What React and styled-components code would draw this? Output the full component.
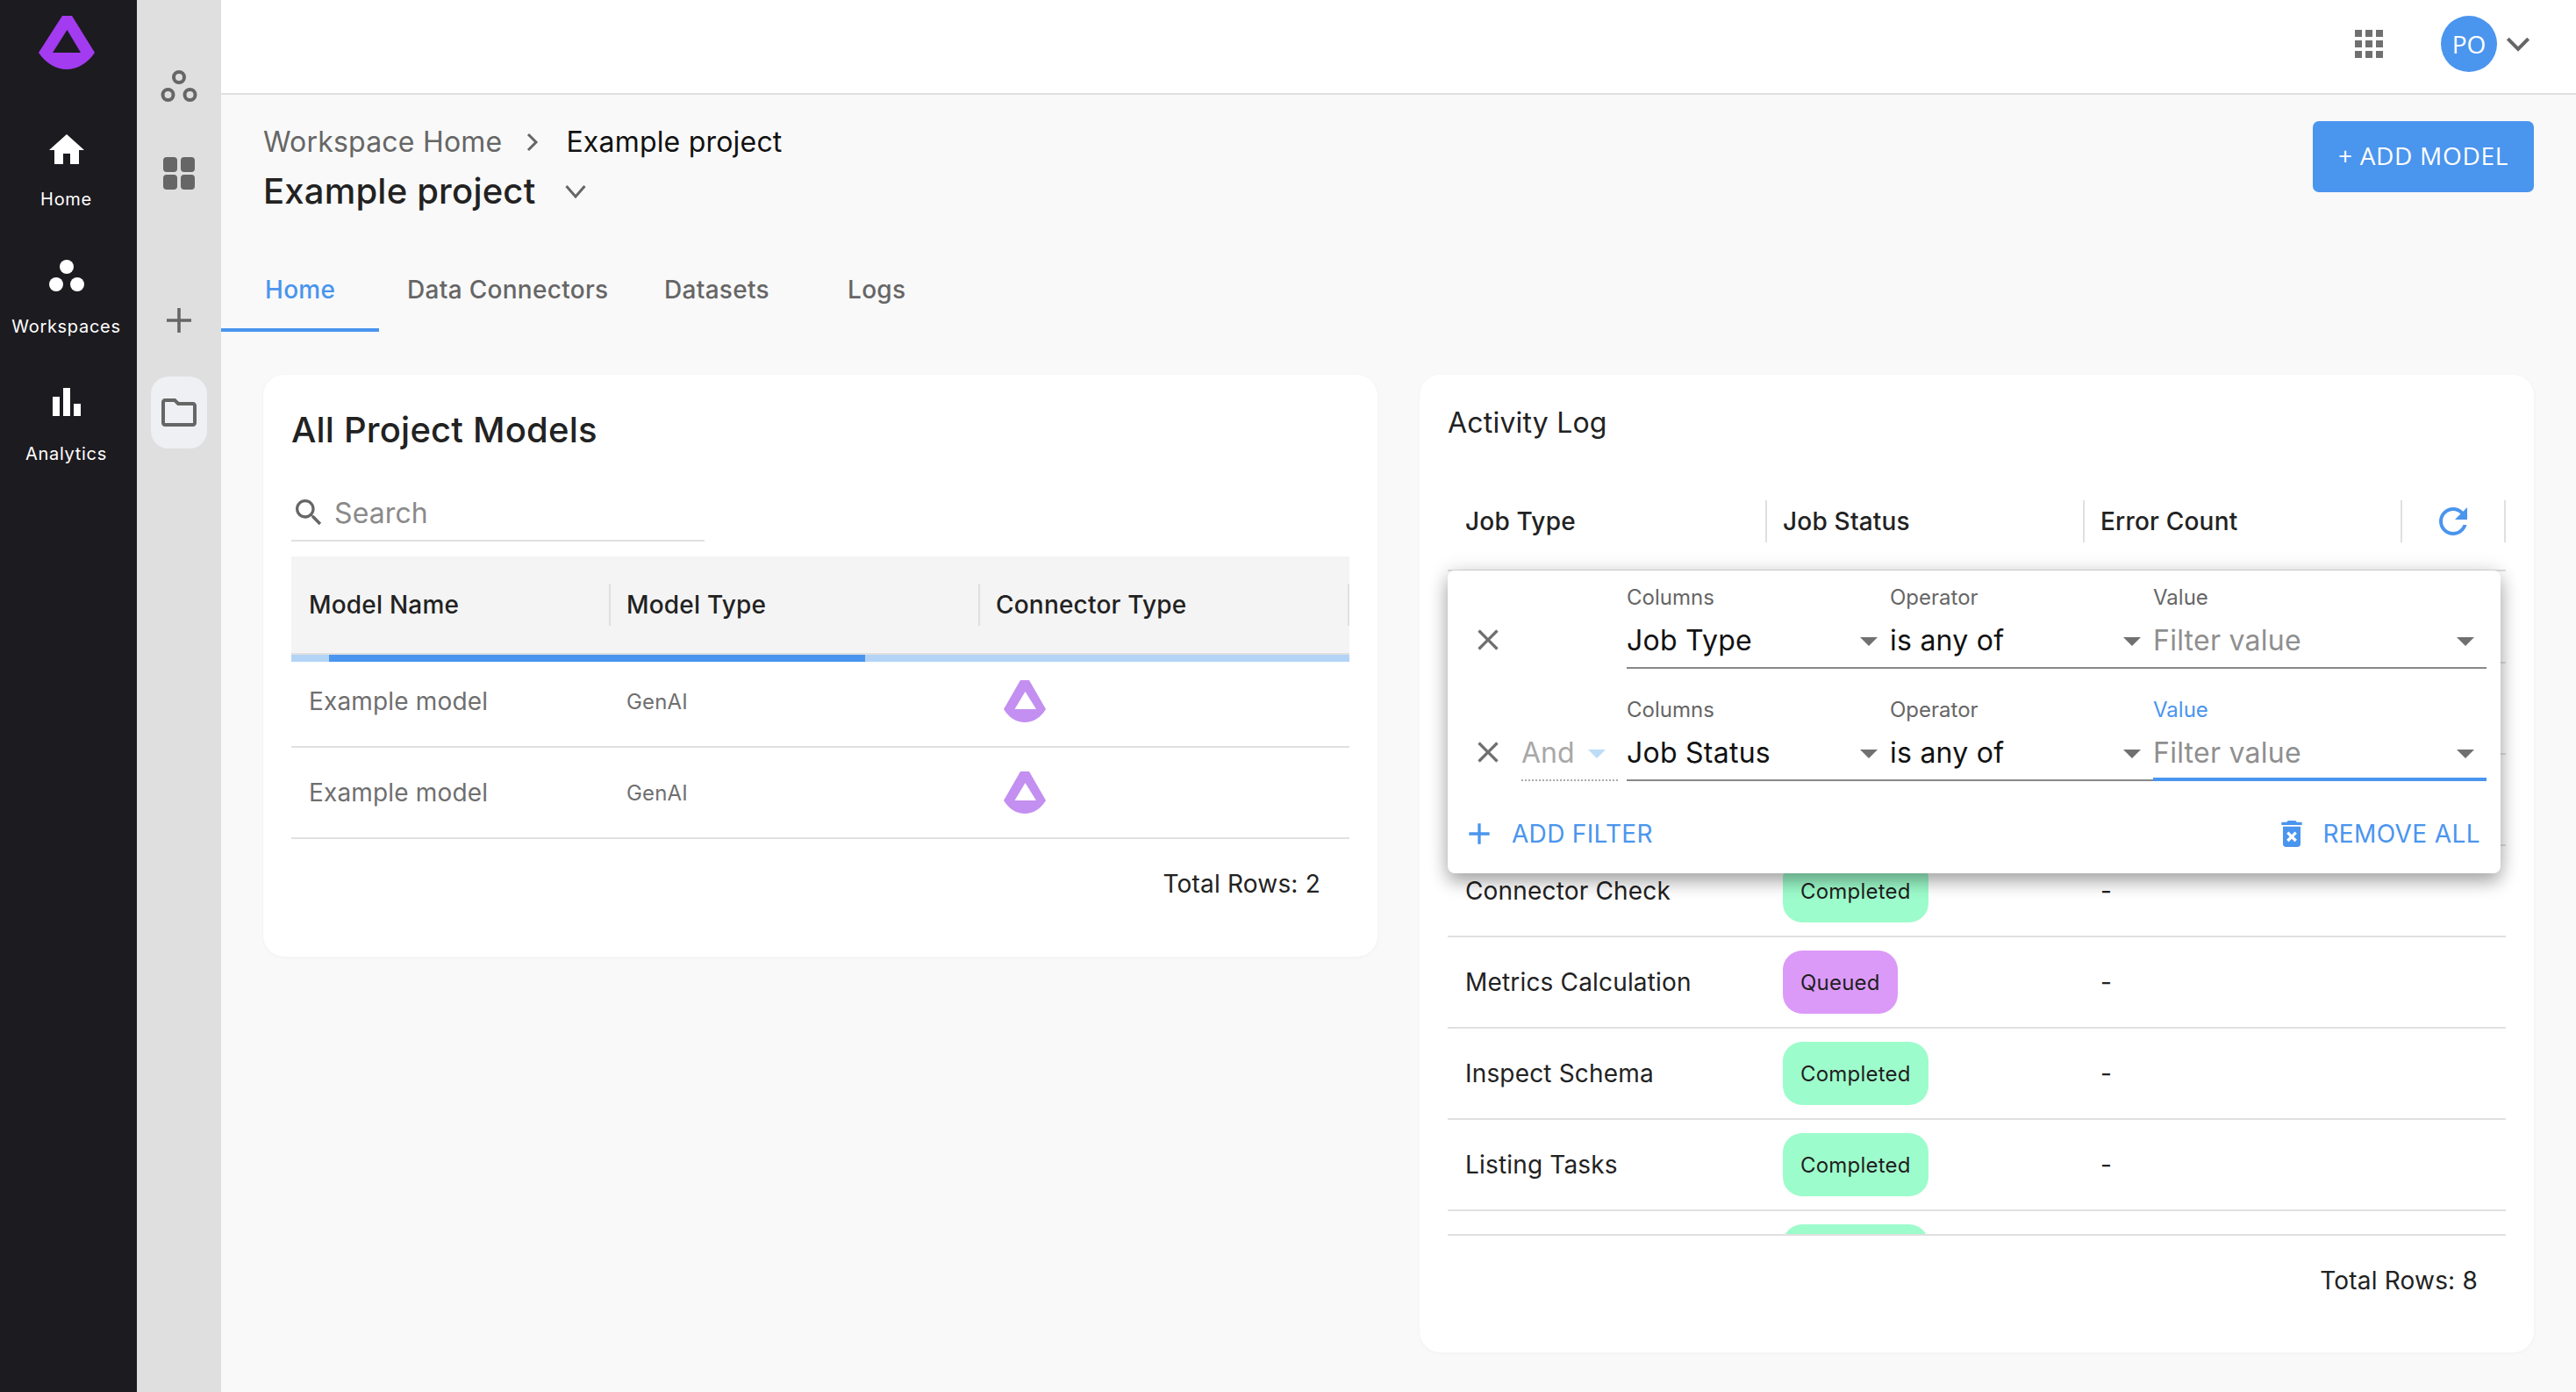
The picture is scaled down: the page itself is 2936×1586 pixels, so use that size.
import React from 'react';
import styled, { createGlobalStyle } from 'styled-components';

const Global = createGlobalStyle`
  html, body { margin: 0; padding: 0; background: #f9f9f9; }
  body { font-family: Inter, "Liberation Sans", sans-serif; color: #1f1f1f; overflow: hidden; }
`;

const ACCENT = '#4a95ee';

const Page = styled.div`
  display: flex;
  width: 2936px;
  height: 1586px;
  overflow: hidden;
`;

const MainRail = styled.nav`
  width: 156px;
  flex: none;
  background: #1c1b20;
  display: flex;
  flex-direction: column;
  align-items: center;
  padding: 18px 5px 0 0;
  box-sizing: border-box;
`;

const Logo = styled.svg`
  display: block;
  width: 64px;
  height: 62px;
  margin-bottom: 67px;
`;

const NavItem = styled.a`
  display: flex;
  flex-direction: column;
  align-items: center;
  height: 145px;
  color: #fff;
  font-size: 20px;
  font-weight: 400;
  letter-spacing: 0.7px;
  line-height: 25px;
  svg { display: block; width: 48px; height: 48px; margin-bottom: 20px; fill: #fff; }
`;

const SubRail = styled.aside`
  width: 96px;
  flex: none;
  background: #dfdfdf;
  display: flex;
  flex-direction: column;
  align-items: center;
  padding-top: 74px;
  box-sizing: border-box;
`;

const RailIcon = styled.svg`
  display: block;
  width: 48px;
  height: 48px;
  fill: #666;
`;

const RailButton = styled.div`
  width: 64px;
  height: ${p => (p.$active ? 82 : 48)}px;
  border-radius: 20px;
  display: flex;
  align-items: center;
  justify-content: center;
  background: ${p => (p.$active ? '#eff0f4' : 'transparent')};
  margin-bottom: ${p => p.$gap || 0}px;
`;

const Body = styled.div`
  flex: 1;
  min-width: 0;
  display: flex;
  flex-direction: column;
`;

const TopBar = styled.header`
  height: 108px;
  flex: none;
  box-sizing: border-box;
  background: #fff;
  border-bottom: 2px solid #e0e0e0;
  display: flex;
  align-items: center;
  justify-content: flex-end;
  padding: 0 52px 6px 0;
`;

const AppsIcon = styled.svg`
  width: 48px;
  height: 48px;
  fill: #707070;
  margin-right: 58px;
`;

const Avatar = styled.div`
  width: 64px;
  height: 64px;
  border-radius: 50%;
  background: ${ACCENT};
  color: #fff;
  font-family: "Open Sans", sans-serif;
  font-size: 28px;
  display: flex;
  align-items: center;
  justify-content: center;
`;

const Chevron = styled.svg`
  width: 28px;
  height: 28px;
  margin-left: 10px;
  fill: none;
  stroke: #666;
  stroke-width: 3.5;
`;

const TitleChevron = styled.svg`
  width: 24px;
  height: 24px;
  margin-left: 34px;
  fill: none;
  stroke: #666;
  stroke-width: 3;
`;

const Content = styled.main`
  flex: 1;
  padding: 30px 48px 0 48px;
  min-height: 0;
  display: flex;
  flex-direction: column;
`;

const HeadRow = styled.div`
  display: flex;
  justify-content: space-between;
  align-items: flex-start;
  height: 132px;
`;

const Crumbs = styled.div`
  display: flex;
  align-items: center;
  font-size: 32px;
  line-height: 48px;
  letter-spacing: 0.2px;
  color: #666;
`;

const CrumbSep = styled.svg`
  width: 16px;
  height: 24px;
  margin: 0 30px 0 27px;
  fill: none;
  stroke: #666;
  stroke-width: 3;
`;

const CrumbNow = styled.span`
  color: #111;
`;

const Title = styled.div`
  display: flex;
  align-items: center;
  font-size: 40px;
  line-height: 64px;
  font-weight: 500;
  letter-spacing: 0.2px;
  color: #222;
`;

const AddButton = styled.button`
  border: 0;
  width: 252px;
  height: 81px;
  padding: 0 0 3px;
  border-radius: 7px;
  background: ${ACCENT};
  color: #fff;
  font-family: "Open Sans", sans-serif;
  font-size: 28px;
  letter-spacing: 0.7px;
`;

const Tabs = styled.div`
  display: flex;
  height: 108px;
  margin-left: -48px;
  margin-bottom: 49px;
`;

const Tab = styled.div`
  width: ${p => p.$w}px;
  height: 108px;
  padding: 40px 0 0 ${p => p.$pad}px;
  box-sizing: border-box;
  font-size: 28px;
  line-height: 40px;
  font-weight: 500;
  letter-spacing: 0.3px;
  color: ${p => (p.$active ? ACCENT : '#666')};
  border-bottom: 4px solid ${p => (p.$active ? ACCENT : 'transparent')};
`;

const Cards = styled.div`
  display: flex;
  gap: 48px;
  align-items: flex-start;
`;

const Card = styled.section`
  background: #fff;
  border-radius: 24px;
  box-sizing: border-box;
  width: 1270px;
  height: ${p => p.$h}px;
  padding: ${p => p.$top}px 32px 0 32px;
  box-shadow: 0 1px 4px rgba(0, 0, 0, 0.04);
`;

const CardTitle = styled.h2`
  margin: 0;
  font-size: 40px;
  line-height: 60px;
  font-weight: 500;
  letter-spacing: 0.2px;
  color: #222;
`;

const LogTitle = styled.h2`
  margin: 0;
  font-size: 32px;
  line-height: 50px;
  font-weight: 400;
  letter-spacing: 0.2px;
  color: #222;
`;

const SearchBox = styled.div`
  width: 471px;
  height: 62px;
  margin: 33px 0 17px;
  border-bottom: 2px solid #e0e0e0;
  display: flex;
  align-items: center;
  font-size: 32px;
  letter-spacing: 0.1px;
  color: #8a8a8a;
  svg { width: 40px; height: 40px; fill: #666; margin-right: 9px; }
`;

const GridRow = styled.div`
  display: grid;
  grid-template-columns: ${p => p.$cols};
  align-items: ${p => p.$align || 'center'};
  height: ${p => p.$h}px;
  padding-bottom: ${p => p.$bottom || 0}px;
  box-sizing: border-box;
  background: ${p => p.$bg || 'transparent'};
  border-bottom: ${p => (p.$line ? '2px solid #e0e0e0' : '0')};
`;

const HeadCell = styled.div`
  height: 48px;
  display: flex;
  align-items: center;
  padding-left: ${p => (p.$first ? 20 : 18)}px;
  border-left: ${p => (p.$first ? '0' : '2px solid #e0e0e0')};
  border-right: ${p => (p.$last ? '2px solid #e0e0e0' : '0')};
  font-size: 28px;
  font-weight: 500;
  letter-spacing: 0.2px;
  color: #222;
`;

const Progress = styled.div`
  height: 8px;
  background: #b3d4f6;
  position: relative;
`;

const ProgressBar = styled.div`
  position: absolute;
  left: 43px;
  width: 611px;
  top: 0;
  bottom: 0;
  background: ${ACCENT};
`;

const Cell = styled.div`
  padding-left: 20px;
  font-size: ${p => p.$size || 28}px;
  letter-spacing: 0.17px;
  color: ${p => p.$color || '#6f6f6f'};
`;

const ConnectorLogo = styled.svg`
  display: block;
  width: 48px;
  height: 48px;
  margin-left: 9px;
`;

const Footer = styled.div`
  text-align: right;
  font-size: 28px;
  line-height: 40px;
  letter-spacing: 0.2px;
  color: #222;
  padding-right: ${p => p.$pad}px;
  margin-top: 31px;
`;

const LogTable = styled.div`
  margin-top: 63px;
  position: relative;
`;

const RefreshCell = styled.div`
  height: 48px;
  display: flex;
  align-items: center;
  padding-left: 34px;
  border-left: 2px solid #e0e0e0;
  border-right: 2px solid #e0e0e0;
  svg { width: 48px; height: 48px; fill: ${ACCENT}; }
`;

const Scroller = styled.div`
  height: 757px;
  padding-top: 1px;
  overflow: hidden;
  border-bottom: 2px solid #e0e0e0;
  box-sizing: border-box;
`;

const Chip = styled.span`
  display: inline-flex;
  align-items: center;
  height: 72px;
  padding: 0 20px;
  border-radius: 22px;
  font-size: 24px;
  letter-spacing: 0.2px;
  color: #1f1f1f;
  background: ${p => (p.$kind === 'queued' ? '#dc9af8' : '#9dfccb')};
`;

const Popover = styled.div`
  position: absolute;
  left: 0;
  top: 80px;
  width: 1200px;
  height: 345px;
  background: #fff;
  border-radius: 8px;
  box-shadow: 0 10px 20px rgba(0, 0, 0, 0.3), 0 0 24px rgba(0, 0, 0, 0.12);
  box-sizing: border-box;
  padding: 0 16px 0 24px;
  display: flex;
  flex-direction: column;
`;

const FilterRow = styled.div`
  display: grid;
  grid-template-columns: 60px 120px 300px 300px 380px;
  height: 112px;
  flex: none;
  & + & { margin-top: 16px; }
`;

const IconCell = styled.div`
  display: flex;
  align-items: flex-end;
  padding-bottom: 13px;
  svg { width: 40px; height: 40px; fill: #707070; margin-left: 2px; }
`;

const LinkCell = styled.div`
  display: flex;
  align-items: flex-end;
  font-size: 32px;
  color: #a8a8a8;
  margin-right: 10px;
`;

const LinkInner = styled.div`
  width: 100%;
  height: 64px;
  box-sizing: border-box;
  display: flex;
  justify-content: space-between;
  align-items: center;
  padding-right: 14px;
  border-bottom: 2px dotted #aaa;
`;

const Field = styled.div`
  display: flex;
  flex-direction: column;
  justify-content: flex-end;
`;

const FieldLabel = styled.label`
  font-size: 24px;
  line-height: 30px;
  margin-bottom: 2px;
  color: ${p => (p.$focus ? ACCENT : '#666')};
`;

const FieldValue = styled.div`
  height: 64px;
  box-sizing: border-box;
  display: flex;
  align-items: center;
  justify-content: space-between;
  font-size: 32px;
  letter-spacing: 0.25px;
  color: ${p => (p.$muted ? '#8f8f8f' : '#111')};
  border-bottom: ${p => (p.$focus ? `4px solid ${ACCENT}` : '2px solid #888')};
  padding: ${p => (p.$focus ? '2px' : '0')} 14px 0 0;
`;

const Caret = styled.span`
  width: 0;
  height: 0;
  margin-top: 3px;
  border-left: 10px solid transparent;
  border-right: 10px solid transparent;
  border-top: 10px solid ${p => p.$color || '#707070'};
`;

const PopActions = styled.div`
  display: flex;
  justify-content: space-between;
  align-items: center;
  margin-top: 40px;
  padding-right: 7px;
`;

const ActionBtn = styled.div`
  display: flex;
  align-items: center;
  gap: ${p => p.$gap}px;
  margin-left: ${p => p.$shift || 0}px;
  color: ${ACCENT};
  font-size: 28px;
  letter-spacing: ${p => p.$spacing}px;
  svg { width: 40px; height: 40px; fill: ${ACCENT}; }
`;

const logoPath = 'M27 0H38L64 42C56 54 44 61 32 61C20 61 8 54 0 42ZM32.5 16L16 42H48Z';
const connectorPath = 'M19 0H29L48 33C42 43 33 48 24 48C15 48 6 43 0 33ZM24.5 13L12.5 33H37Z';

const models = ['Example model', 'Example model'];
const MODEL_COLS = '362px 421px 1fr';
const LOG_COLS = '362px 362px 362px 120px';

const logRows = [
  { id: 1 },
  { id: 2 },
  { id: 3 },
  { id: 4, name: 'Connector Check', status: 'Completed' },
  { id: 5, name: 'Metrics Calculation', status: 'Queued' },
  { id: 6, name: 'Inspect Schema', status: 'Completed' },
  { id: 7, name: 'Listing Tasks', status: 'Completed' },
  { id: 8, status: 'Completed' },
];

function FilterLine({ column, focus, link }) {
  return (
    <FilterRow>
      <IconCell>
        <svg viewBox="0 0 24 24"><path d="M19 6.41 17.59 5 12 10.59 6.41 5 5 6.41 10.59 12 5 17.59 6.41 19 12 13.41 17.59 19 19 17.59 13.41 12z" /></svg>
      </IconCell>
      <LinkCell>
        {link && (
          <LinkInner>
            And
            <Caret $color="#bcdcf8" />
          </LinkInner>
        )}
      </LinkCell>
      <Field>
        <FieldLabel>Columns</FieldLabel>
        <FieldValue>{column}<Caret /></FieldValue>
      </Field>
      <Field>
        <FieldLabel>Operator</FieldLabel>
        <FieldValue>is any of<Caret /></FieldValue>
      </Field>
      <Field>
        <FieldLabel $focus={focus}>Value</FieldLabel>
        <FieldValue $muted $focus={focus}>Filter value<Caret /></FieldValue>
      </Field>
    </FilterRow>
  );
}

export default function App() {
  return (
    <Page>
      <Global />
      <MainRail>
        <Logo viewBox="0 0 64 62"><path fill="#a33bf0" d={logoPath} /></Logo>
        <NavItem>
          <svg viewBox="0 0 24 24"><path d="M10 20v-6h4v6h5v-8h3L12 3 2 12h3v8z" /></svg>
          Home
        </NavItem>
        <NavItem>
          <svg viewBox="0 0 48 48"><circle cx="24" cy="12" r="8" /><circle cx="12" cy="32" r="8" /><circle cx="36" cy="32" r="8" /></svg>
          Workspaces
        </NavItem>
        <NavItem>
          <svg viewBox="0 0 48 48"><rect x="8" y="15" width="8" height="22" /><rect x="20" y="5" width="8" height="32" /><rect x="32" y="23" width="8" height="14" /></svg>
          Analytics
        </NavItem>
      </MainRail>
      <SubRail>
        <RailButton $gap={51}>
          <RailIcon viewBox="0 0 48 48">
            <g fill="none" stroke="#666" strokeWidth="4">
              <circle cx="24" cy="14" r="6" />
              <circle cx="11.5" cy="34" r="6" />
              <circle cx="36.5" cy="34" r="6" />
            </g>
          </RailIcon>
        </RailButton>
        <RailButton $gap={120}>
          <RailIcon viewBox="0 0 48 48">
            <rect x="6" y="6" width="16" height="17" rx="4" />
            <rect x="26" y="6" width="16" height="17" rx="4" />
            <rect x="6" y="26" width="16" height="17" rx="4" />
            <rect x="26" y="26" width="16" height="17" rx="4" />
          </RailIcon>
        </RailButton>
        <RailButton $gap={40}>
          <RailIcon viewBox="0 0 48 48">
            <path d="M22.2 10h3.6v12.2H38v3.6H25.8V38h-3.6V25.8H10v-3.6h12.2z" />
          </RailIcon>
        </RailButton>
        <RailButton $active>
          <RailIcon viewBox="0 0 24 24">
            <path d="M9.17 6l2 2H20v10H4V6h5.17M10 4H4c-1.1 0-1.99.9-1.99 2L2 18c0 1.1.9 2 2 2h16c1.1 0 2-.9 2-2V8c0-1.1-.9-2-2-2h-8l-2-2z" />
          </RailIcon>
        </RailButton>
      </SubRail>
      <Body>
        <TopBar>
          <AppsIcon viewBox="0 0 24 24">
            <path d="M4 8h4V4H4v4zm6 12h4v-4h-4v4zm-6 0h4v-4H4v4zm0-6h4v-4H4v4zm6 0h4v-4h-4v4zm6-10v4h4V4h-4zm-6 4h4V4h-4v4zm6 6h4v-4h-4v4zm0 6h4v-4h-4v4z" />
          </AppsIcon>
          <Avatar>PO</Avatar>
          <Chevron viewBox="0 0 24 24"><path d="M2 7l10 10L22 7" /></Chevron>
        </TopBar>
        <Content>
          <HeadRow>
            <div>
              <Crumbs>
                Workspace Home
                <CrumbSep viewBox="0 0 16 24"><path d="M3 3l9 9-9 9" /></CrumbSep>
                <CrumbNow>Example project</CrumbNow>
              </Crumbs>
              <Title>
                Example project
                <TitleChevron viewBox="0 0 24 24"><path d="M1.5 6L12 18 22.5 6" /></TitleChevron>
              </Title>
            </div>
            <AddButton>+ ADD MODEL</AddButton>
          </HeadRow>
          <Tabs>
            <Tab $w={180} $pad={50} $active>Home</Tab>
            <Tab $w={293} $pad={32}>Data Connectors</Tab>
            <Tab $w={209} $pad={32}>Datasets</Tab>
            <Tab $w={130} $pad={32}>Logs</Tab>
          </Tabs>
          <Cards>
            <Card $h={663} $top={33}>
              <CardTitle>All Project Models</CardTitle>
              <SearchBox>
                <svg viewBox="0 0 24 24"><path d="M15.5 14h-.79l-.28-.27C15.41 12.59 16 11.11 16 9.5 16 5.91 13.09 3 9.5 3S3 5.91 3 9.5 5.91 16 9.5 16c1.61 0 3.09-.59 4.23-1.57l.27.28v.79l5 4.99L20.49 19l-4.99-5zm-6 0C7.01 14 5 11.99 5 9.5S7.01 5 9.5 5 14 7.01 14 9.5 11.99 14 9.5 14z" /></svg>
                Search
              </SearchBox>
              <GridRow $cols={MODEL_COLS} $h={112} $bg="#f4f4f4" $line>
                <HeadCell $first>Model Name</HeadCell>
                <HeadCell>Model Type</HeadCell>
                <HeadCell $last>Connector Type</HeadCell>
              </GridRow>
              <Progress><ProgressBar /></Progress>
              {models.map((name, i) => (
                <GridRow key={i} $cols={MODEL_COLS} $h={i === 0 ? 98 : 104} $bottom={i === 0 ? 6 : 0} $line>
                  <Cell>{name}</Cell>
                  <Cell $size={24}>GenAI</Cell>
                  <Cell>
                    <ConnectorLogo viewBox="0 0 48 48"><path fill="#c38ff1" d={connectorPath} /></ConnectorLogo>
                  </Cell>
                </GridRow>
              ))}
              <Footer $pad={33}>Total Rows: 2</Footer>
            </Card>
            <Card $h={1114} $top={30}>
              <LogTitle>Activity Log</LogTitle>
              <LogTable>
                <GridRow $cols={LOG_COLS} $h={81} $align="start" $line>
                  <HeadCell $first>Job Type</HeadCell>
                  <HeadCell>Job Status</HeadCell>
                  <HeadCell>Error Count</HeadCell>
                  <RefreshCell>
                    <svg viewBox="0 0 24 24"><path d="M17.65 6.35C16.2 4.9 14.21 4 12 4c-4.42 0-7.99 3.58-7.99 8s3.57 8 7.99 8c3.73 0 6.84-2.55 7.73-6h-2.08c-.82 2.33-3.04 4-5.65 4-3.31 0-6-2.69-6-6s2.69-6 6-6c1.66 0 3.14.69 4.22 1.78L13 11h7V4l-2.35 2.35z" /></svg>
                  </RefreshCell>
                </GridRow>
                <Scroller>
                  {logRows.map(row => (
                    <GridRow key={row.id} $cols={LOG_COLS} $h={104} $line>
                      <Cell $color="#222">{row.name}</Cell>
                      <Cell>{row.status && <Chip $kind={row.status.toLowerCase()}>{row.status}</Chip>}</Cell>
                      <Cell $color="#222">{row.name && '-'}</Cell>
                    </GridRow>
                  ))}
                </Scroller>
                <Popover>
                  <FilterLine column="Job Type" />
                  <FilterLine column="Job Status" focus link />
                  <PopActions>
                    <ActionBtn $gap={17} $shift={-8} $spacing={0.3}>
                      <svg viewBox="0 0 24 24"><path d="M19 13h-6v6h-2v-6H5v-2h6V5h2v6h6v2z" /></svg>
                      ADD FILTER
                    </ActionBtn>
                    <ActionBtn $gap={15} $spacing={0.4}>
                      <svg viewBox="0 0 24 24"><path d="M6 19c0 1.1.9 2 2 2h8c1.1 0 2-.9 2-2V7H6v12zm2.46-7.12l1.41-1.41L12 12.59l2.12-2.12 1.41 1.41L13.41 14l2.12 2.12-1.41 1.41L12 15.41l-2.12 2.12-1.41-1.41L10.59 14l-2.13-2.12zM15.5 4l-1-1h-5l-1 1H5v2h14V4z" /></svg>
                      REMOVE ALL
                    </ActionBtn>
                  </PopActions>
                </Popover>
              </LogTable>
              <Footer $pad={32}>Total Rows: 8</Footer>
            </Card>
          </Cards>
        </Content>
      </Body>
    </Page>
  );
}
